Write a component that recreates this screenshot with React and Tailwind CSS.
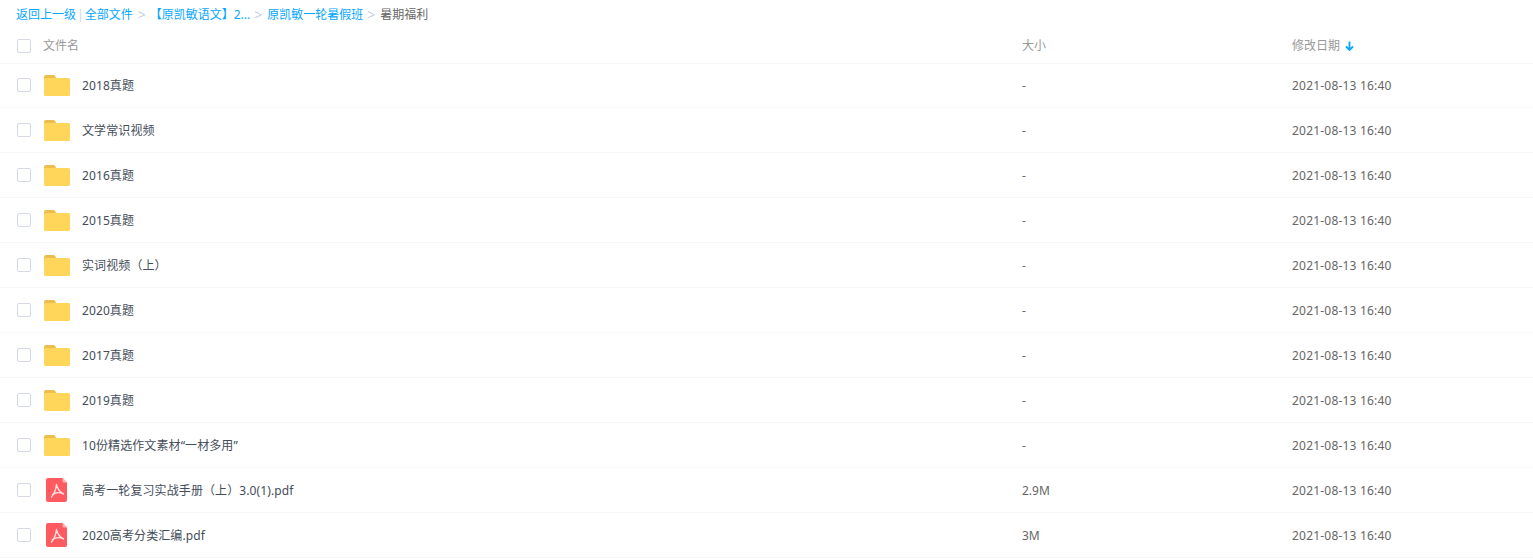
const CJK = "font-['Noto_Sans','Noto_Sans_CJK_SC',sans-serif]";

const rows = [
  { name: "2018真题", size: "-", type: "folder" },
  { name: "文学常识视频", size: "-", type: "folder" },
  { name: "2016真题", size: "-", type: "folder" },
  { name: "2015真题", size: "-", type: "folder" },
  { name: "实词视频（上）", size: "-", type: "folder" },
  { name: "2020真题", size: "-", type: "folder" },
  { name: "2017真题", size: "-", type: "folder" },
  { name: "2019真题", size: "-", type: "folder" },
  { name: "10份精选作文素材“一材多用”", size: "-", type: "folder" },
  { name: "高考一轮复习实战手册（上）3.0(1).pdf", size: "2.9M", type: "pdf" },
  { name: "2020高考分类汇编.pdf", size: "3M", type: "pdf" },
];

function Folder() {
  return (
    <svg width="26" height="21" viewBox="0 0 26 21" className="block">
      <path d="M0 2a2 2 0 0 1 2-2h7.500a2 2 0 0 1 1.800 1.200L12.500 4H0z" fill="#EDBE4C" />
      <path d="M0 4.500a1.500 1.500 0 0 1 1.500-1.500h23A1.500 1.500 0 0 1 26 4.500v15a1.500 1.500 0 0 1-1.500 1.500h-23A1.500 1.500 0 0 1 0 19.500z" fill="#FFD659" />
    </svg>
  );
}

function Pdf() {
  return (
    <svg width="21" height="24" viewBox="0 0 21 24" className="block">
      <path d="M2 0h14.500L21 4.500V22a2 2 0 0 1-2 2H2a2 2 0 0 1-2-2V2a2 2 0 0 1 2-2z" fill="#FF5A5F" />
      <path d="M16.500 0L21 4.500h-3a1.500 1.500 0 0 1-1.500-1.500z" fill="#FFB3B5" />
      <path d="M10.500 6.500C10 11 8 16 5.500 19M10.500 6.500C11 10 14 14.500 17.500 16M6.500 16.500C9.500 14.500 13 14 17 15.500" fill="none" stroke="#FFE3E3" strokeWidth="1.400" strokeLinecap="round" />
    </svg>
  );
}

function Box() {
  return <span className="block w-3.5 h-3.5 border border-[#d4d9e3] rounded-[2px] bg-white" />;
}

export default function App() {
  return (
    <div className={`w-[1533px] h-[560px] overflow-hidden bg-white text-xs ${CJK}`}>
      <div className="h-[27px] pl-4 pt-[2px] flex items-center text-[#06a7ff] whitespace-nowrap">
        <span>返回上一级</span>
        <span className="text-[#c4d8f4] mx-[1px]">|</span>
        <span>全部文件</span>
        <span className="text-[#c4d0e0] text-sm ml-[5px]">&gt;</span>
        <span className="ml-[4px]">【原凯敏语文】2...</span>
        <span className="text-[#c4d0e0] text-sm ml-[4px] mr-[5px]">&gt;</span>
        <span>原凯敏一轮暑假班</span>
        <span className="text-[#c4d0e0] text-sm ml-[4px] mr-[5px]">&gt;</span>
        <span className="text-[#666]">暑期福利</span>
      </div>
      <div className="h-[37px] flex items-center border-b border-[#f4f6fa] text-[#999]">
        <div className="w-[43px] pl-[17px] pt-[1px] shrink-0"><Box /></div>
        <div className="w-[979px] shrink-0 pt-[2px]">文件名</div>
        <div className="w-[270px] shrink-0 pt-[2px]">大小</div>
        <div className="flex items-center pt-[2px]">
          修改日期
          <svg width="9" height="10" viewBox="0 0 9 10" className="ml-[5px]">
            <path d="M4.500 0.500V8.500M1 5.500l3.500 3.500 3.500-3.500" fill="none" stroke="#06a7ff" strokeWidth="1.800" />
          </svg>
        </div>
      </div>
      {rows.map((r, i) => (
        <div key={i} className={`${i === 0 ? "h-[44px]" : "h-[45px]"} flex items-center border-b border-[#f4f6fa] text-[#454d5a]`}>
          <div className="w-[43px] pl-[17px] pb-[1px] shrink-0"><Box /></div>
          <div className={`w-[39px] shrink-0 flex justify-center pr-[12px] ${r.type === "pdf" ? "pl-0" : "pl-[1px]"}`}>
            {r.type === "folder" ? <Folder /> : <Pdf />}
          </div>
          <div className={`w-[940px] shrink-0 ${i === 0 ? "pt-0" : "pt-[2px]"} tracking-[0.1px] whitespace-nowrap`}>{r.name}</div>
          <div className={`w-[270px] shrink-0 ${i === 0 ? "pt-0" : "pt-[2px]"} text-[#666]`}>{r.size}</div>
          <div className={`${i === 0 ? "pt-0" : "pt-[2px]"} tracking-[0.2px] text-[#666]`}>2021-08-13 16:40</div>
        </div>
      ))}
    </div>
  );
}
